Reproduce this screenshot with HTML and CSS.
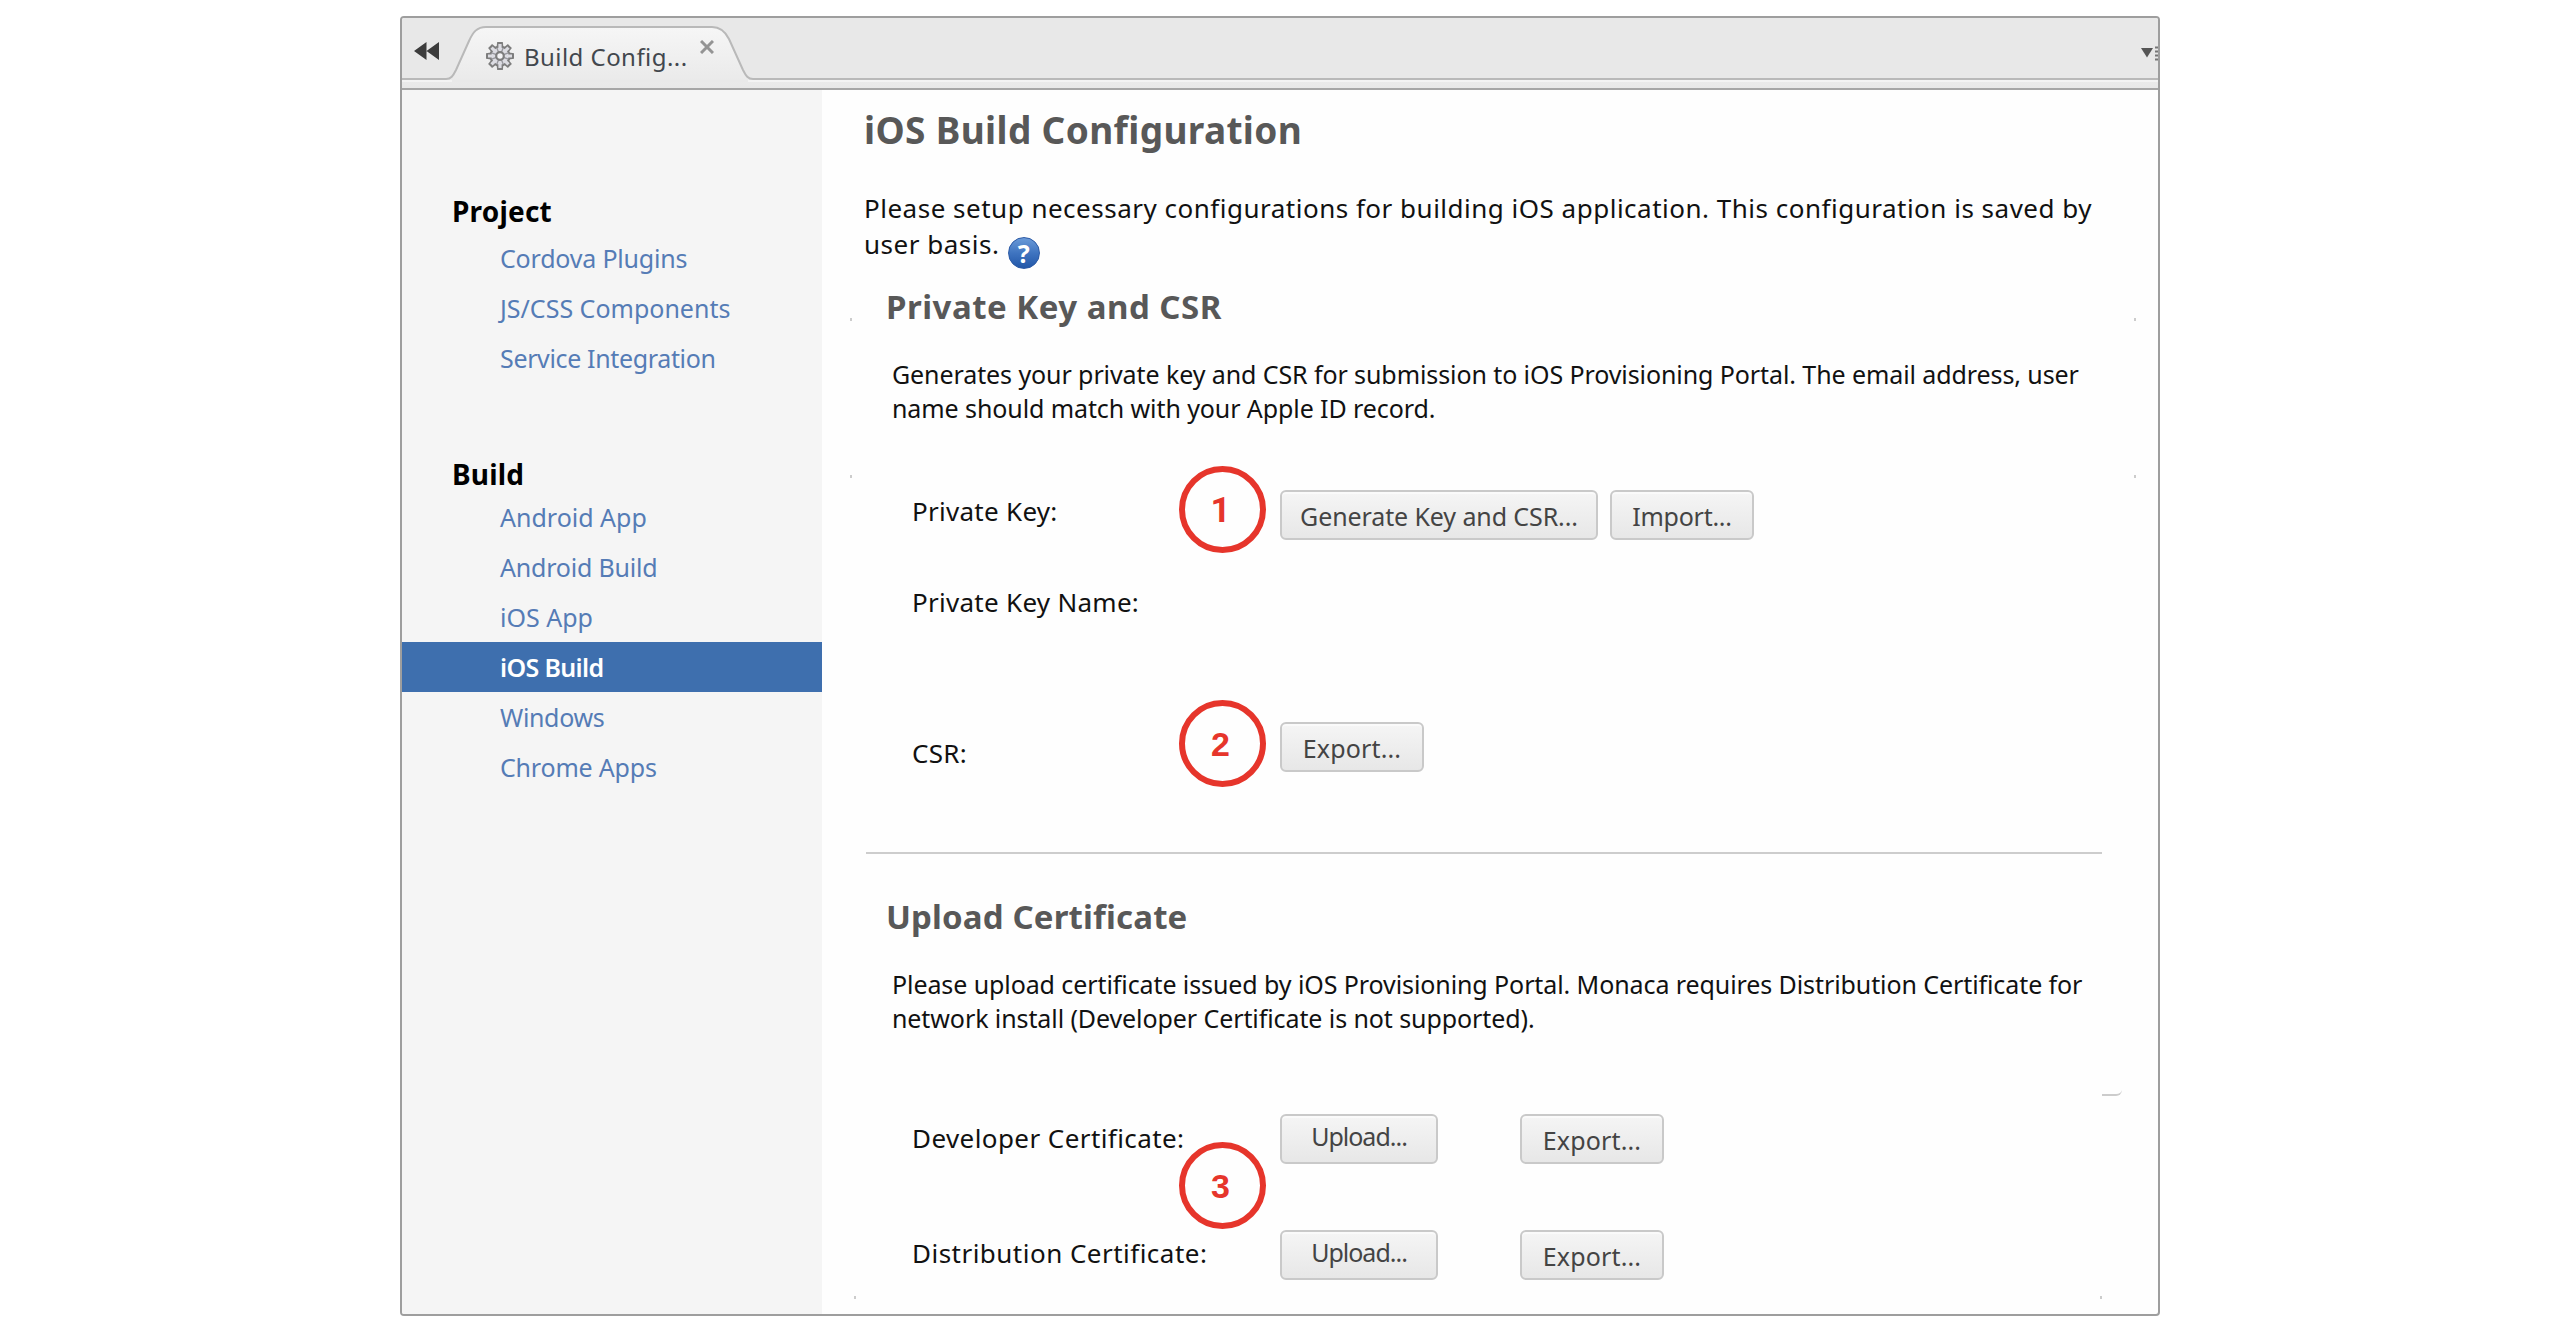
FILE: index.html
```html
<!DOCTYPE html>
<html lang="en">
<head>
<meta charset="utf-8">
<title>Build Configuration</title>
<link rel="stylesheet" href="styles.css">
</head>
<body>
<div class="window">
  <header class="tabbar">
    <svg class="tab-shape" width="1756" height="70" viewBox="402 18 1756 70">
      <defs><linearGradient id="tabfill" x1="0" y1="0" x2="0" y2="1"><stop offset="0" stop-color="#f6f6f6"/><stop offset="1" stop-color="#e8e8e8"/></linearGradient></defs>
      <path d="M402 79H446C451 79 453 76 456 70L469 41C473 32 477 27 486 27H712C720 27 725 31 729 39L743 70C746 76 748 79 753 79H2158V90H402Z" fill="url(#tabfill)"/>
      <path d="M402 81H2158" stroke="#f3f3f3" stroke-width="2" fill="none"/>
      <path d="M402 79H446C451 79 453 76 456 70L469 41C473 32 477 27 486 27H712C720 27 725 31 729 39L743 70C746 76 748 79 753 79H2158" stroke="#b9b9b9" stroke-width="2" fill="none"/>
      <path d="M452 81H748" stroke="#e9e9e9" stroke-width="3"/>
    </svg>
    <svg class="collapse" width="25" height="18" viewBox="0 0 25 18"><path d="M0 9L12.5 0V18ZM12.5 9L25 0V18Z" fill="#3c3c3c"/></svg>
    <div class="tab">
      <svg class="gear" width="28" height="28" viewBox="-14 -14 28 28">
        <g fill="#7d7d7d"><circle r="10.5"/><path id="t" d="M-3.4-9L-2.8-14H2.8L3.4-9V9L2.8 14H-2.8L-3.4 9Z"/><use href="#t" transform="rotate(45)"/><use href="#t" transform="rotate(90)"/><use href="#t" transform="rotate(135)"/></g>
        <g fill="#dcdce2"><circle r="8.6"/><path id="u" d="M-1.6-12H1.6V12H-1.6Z"/><use href="#u" transform="rotate(45)"/><use href="#u" transform="rotate(90)"/><use href="#u" transform="rotate(135)"/></g>
        <path d="M-3.2-8.3L3.2 8.3M-3.2 8.3L3.2-8.3M-8.3-3.2L8.3 3.2M-8.3 3.2L8.3-3.2" stroke="#97979d" stroke-width="1.3"/>
        <circle r="3.8" fill="#f4f4f6" stroke="#7d7d7d" stroke-width="2.2"/>
      </svg>
      <span class="tab-title">Build Config...</span>
      <svg class="close" width="14" height="14" viewBox="0 0 14 14"><path d="M1 1L13 13M13 1L1 13" stroke="#949494" stroke-width="3"/></svg>
    </div>
    <svg class="menu-arrow" width="17" height="16" viewBox="0 0 17 16"><path d="M0 2H12L6 11.5Z" fill="#555"/><path d="M14 1.5H17M14 5.5H17M14 9.5H17M14 13.5H17" stroke="#777" stroke-width="2"/></svg>
  </header>
  <div class="body">
    <nav class="sidebar">
      <h3>Project</h3>
      <ul class="project">
        <li class="tight">Cordova Plugins</li>
        <li>JS/CSS Components</li>
        <li class="tighter">Service Integration</li>
      </ul>
      <h3>Build</h3>
      <ul>
        <li>Android App</li>
        <li class="tight">Android Build</li>
        <li>iOS App</li>
        <li class="active">iOS Build</li>
        <li class="tighter">Windows</li>
        <li class="tight">Chrome Apps</li>
      </ul>
    </nav>
    <main class="main">
      <h1>iOS Build Configuration</h1>
      <p class="lead">Please setup necessary configurations for building iOS application. This configuration is saved by<br>user basis. <span class="help">?</span></p>
      <h2 class="key-title">Private Key and CSR</h2>
      <p class="note">Generates your private key and CSR for submission to iOS Provisioning Portal. The email address, user<br>name should match with your Apple ID record.</p>
      <div class="row key"><label>Private Key:</label><button class="generate">Generate Key and CSR...</button><button class="import">Import...</button></div>
      <div class="row name"><label>Private Key Name:</label></div>
      <div class="row csr"><label>CSR:</label><button>Export...</button></div>
      <hr>
      <h2>Upload Certificate</h2>
      <p class="note">Please upload certificate issued by iOS Provisioning Portal. Monaca requires Distribution Certificate for<br>network install (Developer Certificate is not supported).</p>
      <div class="row dev"><label>Developer Certificate:</label><button class="upload">Upload...</button><button>Export...</button></div>
      <div class="row dist"><label>Distribution Certificate:</label><button class="upload">Upload...</button><button>Export...</button></div>
      <b class="badge b1">1</b><b class="badge b2">2</b><b class="badge b3">3</b>
      <i class="tick k1"></i><i class="tick k2"></i><i class="tick k3"></i><i class="tick k4"></i><i class="tick k5"></i><i class="tick k6"></i><i class="stub"></i>
    </main>
  </div>
</div>
</body>
</html>
```
FILE: styles.css
```css
* { box-sizing: border-box; }
body { margin: 0; background: #fff; font-family: "Noto Sans", "Open Sans", sans-serif; color: #111; }
h1, h2, h3, p, ul { margin: 0; padding: 0; font-weight: 700; }
p { font-weight: 400; }
.window { width: 1760px; height: 1300px; margin: 16px 0 0 400px; border: 2px solid #9e9e9e; border-radius: 4px; background: #fefefe; overflow: hidden; }
.tabbar { position: relative; display: flex; height: 72px; background: #e8e8e8; border-bottom: 2px solid #a6a6a6; }
.tab-shape { position: absolute; left: 0; top: 0; }
.collapse { position: relative; margin: 24px 0 0 12px; }
.tab { position: relative; display: flex; margin-left: 47px; }
.gear { margin-top: 24px; }
.tab-title { margin: 24px 0 0 10px; width: 176px; font-size: 24px; line-height: 30px; letter-spacing: 0.45px; color: #42474d; }
.close { margin-top: 22px; }
.menu-arrow { position: relative; margin: 28px 0 0 auto; }
.body { display: flex; height: 1224px; }
.sidebar { width: 420px; background: #f5f5f5; padding-top: 103px; }
.sidebar h3 { margin-left: 50px; font-size: 28px; line-height: 36px; letter-spacing: 0.2px; color: #000; }
.sidebar ul { list-style: none; font-size: 25px; line-height: 50px; font-weight: 400; letter-spacing: 0; color: #557cb6; }
.sidebar .project { margin: 4px 0 73px; }
.sidebar li { height: 50px; padding-left: 98px; }
.sidebar .tight { letter-spacing: -0.2px; }
.sidebar .tighter { letter-spacing: -0.35px; }
.sidebar .active { background: #3e6fae; color: #fff; font-weight: 600; letter-spacing: -0.65px; }
.main { position: relative; flex: 1; padding: 15px 0 0 42px; }
h1 { font-size: 37px; line-height: 50px; letter-spacing: 0.35px; color: #585858; }
.lead { margin-top: 35px; font-size: 26px; line-height: 36px; height: 72px; letter-spacing: 0.5px; white-space: nowrap; }
.help { display: inline-block; width: 32px; height: 32px; margin-left: 1px; vertical-align: -9px; border: 1px solid #2c5aa5; border-radius: 50%; background: linear-gradient(#6a9ad8, #3f74c0 50%, #2257a8); color: #fff; font: 700 25px/31px "Noto Sans", sans-serif; letter-spacing: 0; text-align: center; }
h2 { margin: 23px 0 0 22px; font-size: 33px; line-height: 44px; letter-spacing: 0.15px; color: #585858; }
.key-title { letter-spacing: 0.5px; }
.note { margin: 28px 0 0 28px; font-size: 25px; line-height: 34px; letter-spacing: -0.09px; white-space: nowrap; }
.row { display: flex; height: 50px; margin-left: 48px; }
.row label { width: 368px; font-size: 26px; line-height: 30px; letter-spacing: 0.28px; margin-top: 6px; white-space: nowrap; }
.key { margin-top: 65px; }
.name { margin-top: 47px; height: 30px; }
.row.name label { margin-top: 0; }
.csr { margin-top: 105px; }
.row.csr label { margin-top: 16px; }
button { width: 144px; height: 50px; padding: 9px 0 0; border: 2px solid #c9c9c9; border-radius: 6px; background: linear-gradient(#f5f5f5, #e7e7e7); box-shadow: inset 0 2px #fafafa; font: 25px/30px "Noto Sans", sans-serif; color: #444; display: flex; justify-content: center; white-space: nowrap; letter-spacing: 0.15px; }
.generate { width: 318px; margin-right: 12px; letter-spacing: -0.1px; }
.import { letter-spacing: -0.25px; }
.upload { width: 158px; margin-right: 82px; padding-top: 5px; letter-spacing: -1px; }
hr { width: 1236px; height: 2px; margin: 80px 0 0 2px; border: 0; background: #cdcdcd; }
hr + h2 { margin-top: 41px; }
.dev { margin-top: 79px; }
.row.dev label { margin-top: 9px; letter-spacing: 0.42px; }
.dist { margin-top: 66px; }
.row.dist label { margin-top: 8px; letter-spacing: 0.48px; }
.badge { position: absolute; left: 357px; width: 87px; height: 87px; padding-right: 4px; border: 6px solid #e6352b; border-radius: 50%; color: #e6352b; font: 700 34px/77px "Liberation Sans", sans-serif; text-align: center; }
.b1 { top: 376px; font-family: Roboto, sans-serif; font-size: 35px; }
.b2 { top: 610px; }
.b3 { top: 1052px; }
.tick { position: absolute; width: 2px; height: 3px; background: #ccc; }
.k1 { left: 28px; top: 228px; }
.k2 { left: 1312px; top: 228px; }
.k3 { left: 28px; top: 385px; }
.k4 { left: 1312px; top: 385px; }
.k5 { left: 32px; top: 1206px; }
.k6 { left: 1278px; top: 1206px; }
.stub { position: absolute; left: 1280px; top: 1000px; width: 20px; height: 6px; border-bottom: 2px solid #ccc; border-bottom-right-radius: 6px; }
```
